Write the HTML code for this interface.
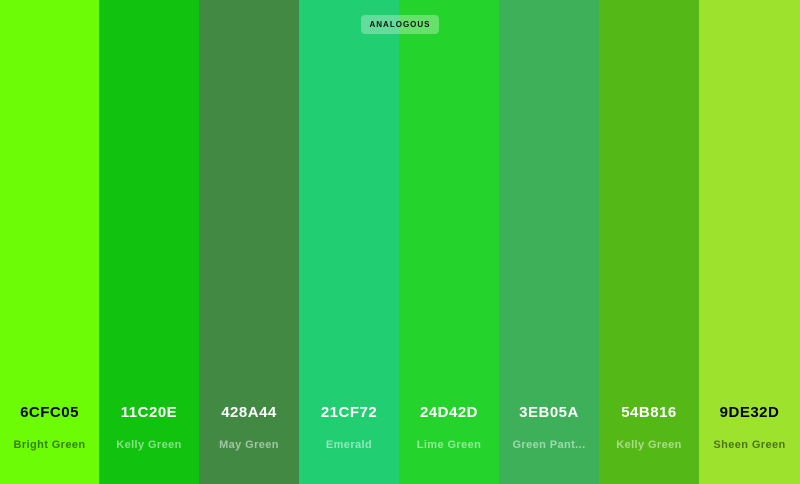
<!DOCTYPE html>
<html><head><style>
*{margin:0;padding:0;box-sizing:border-box}
body{width:800px;height:484px;overflow:hidden;position:relative;font-family:"Liberation Sans",sans-serif;}
.c{position:absolute;top:0;height:484px;text-align:center}
.h{position:absolute;top:404px;left:0;right:0;font-size:15px;font-weight:bold;letter-spacing:0.5px}
.n{position:absolute;top:439px;left:0;right:0;font-size:11px;font-weight:bold;letter-spacing:0.4px}
.w .h{color:#fff}.w .n{color:rgba(255,255,255,0.5)}
.b .h{color:#000}.b .n{color:rgba(0,0,0,0.5)}
.badge{position:absolute;left:361px;top:15px;width:78px;height:19px;border-radius:4px;background:rgba(255,255,255,0.3);font-size:8px;font-weight:bold;letter-spacing:1px;text-align:center;line-height:19px;color:#111}
</style></head><body>
<div class="c b" style="left:0;width:99px;background:#6CFC05"><div class="h">6CFC05</div><div class="n">Bright Green</div></div>
<div class="c w" style="left:99px;width:100px;background:#11C20E"><div class="h">11C20E</div><div class="n">Kelly Green</div></div>
<div class="c w" style="left:199px;width:100px;background:#428A44"><div class="h">428A44</div><div class="n">May Green</div></div>
<div class="c w" style="left:299px;width:100px;background:#21CF72"><div class="h">21CF72</div><div class="n">Emerald</div></div>
<div class="c w" style="left:399px;width:100px;background:#24D42D"><div class="h">24D42D</div><div class="n">Lime Green</div></div>
<div class="c w" style="left:499px;width:100px;background:#3EB05A"><div class="h">3EB05A</div><div class="n">Green Pant...</div></div>
<div class="c w" style="left:599px;width:100px;background:#54B816"><div class="h">54B816</div><div class="n">Kelly Green</div></div>
<div class="c b" style="left:699px;width:101px;background:#9DE32D"><div class="h">9DE32D</div><div class="n">Sheen Green</div></div>
<div class="badge">ANALOGOUS</div>
</body></html>
